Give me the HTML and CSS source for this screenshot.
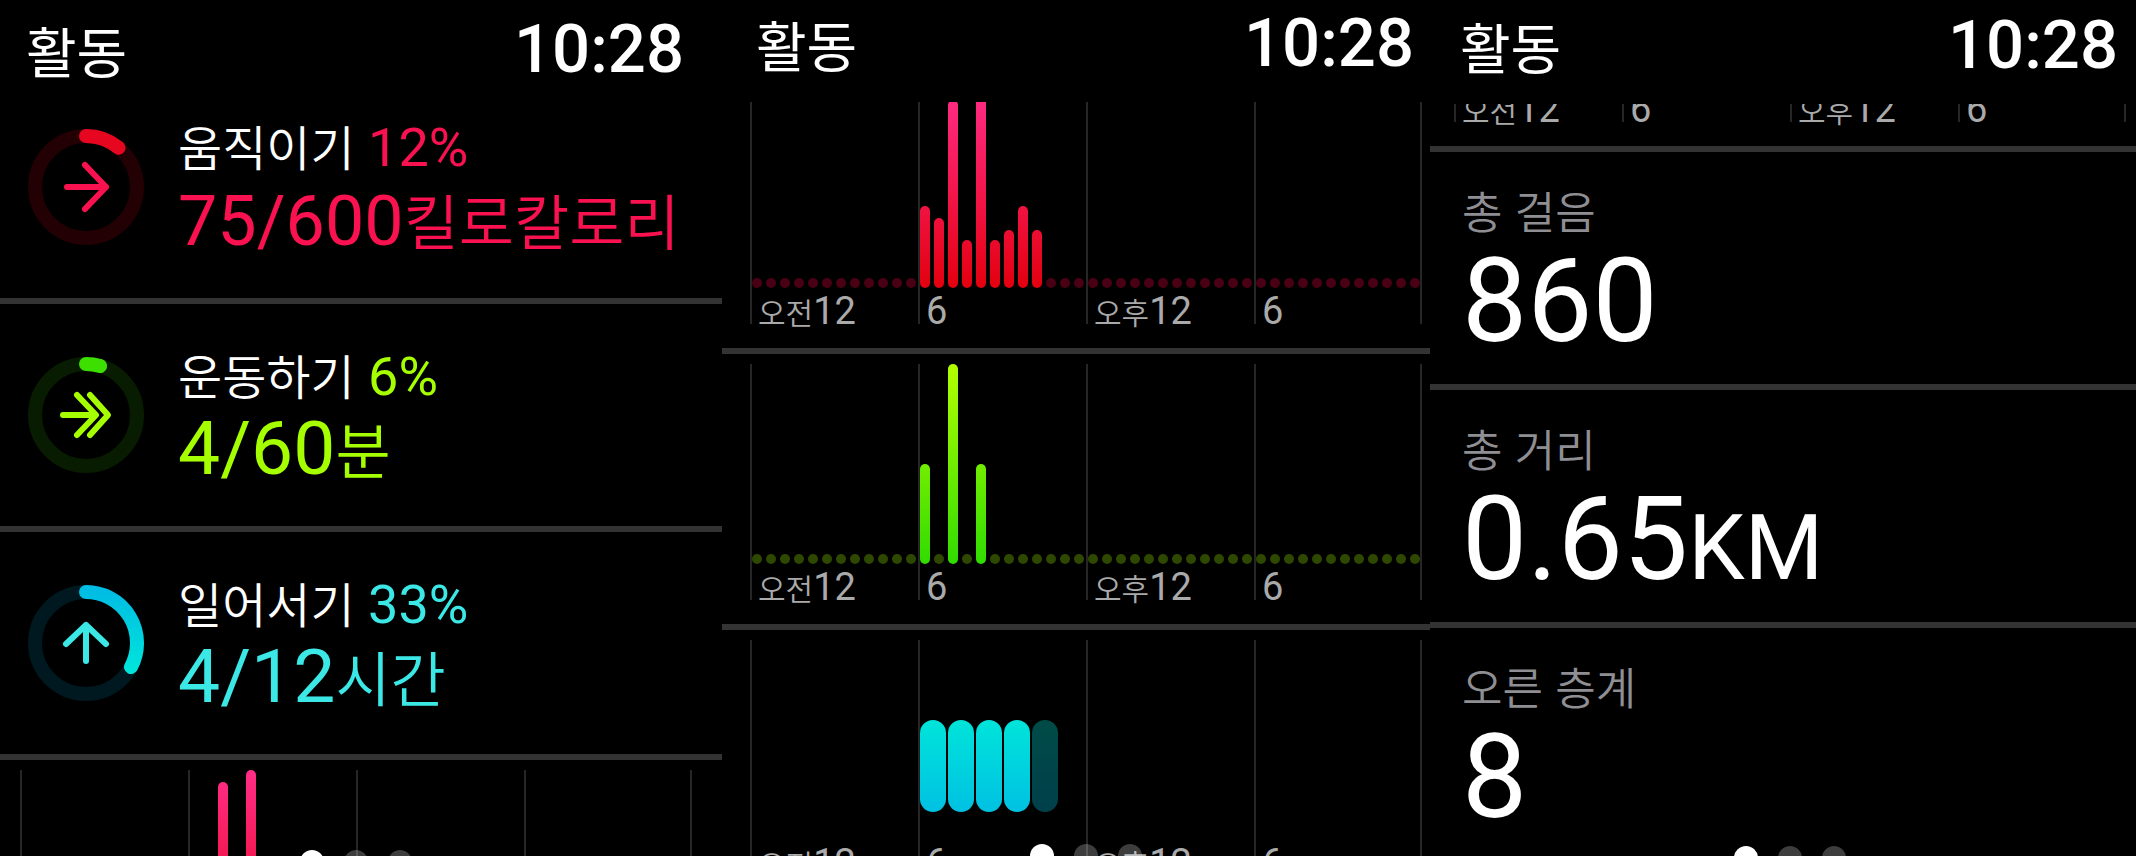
FILE: index.html
```html
<!DOCTYPE html>
<html lang="ko">
<head>
    <meta charset="UTF-8">
    <meta name="viewport" content="width=device-width, initial-scale=1.0">
    <title>활동</title>
    <link rel="stylesheet" href="styles.css">
</head>
<body>
    <main class="screens">
        <section class="screen screen-rings">
            <header class="status-bar">
                <h1>활동</h1>
                <time>10:28</time>
            </header>
            <div class="content">
                <article class="goal goal-move">
                    <svg class="ring" viewBox="0 0 116 118" aria-hidden="true">
                        <circle class="track" cx="58" cy="59" r="51"/>
                        <circle class="progress" cx="58" cy="59" r="51" pathLength="100" stroke-dasharray="11 100" transform="rotate(-90 58 59)"/>
                        <path class="arrow" d="M39 59H78M57 37L78 59L57 81"/>
                    </svg>
                    <div class="goal-info">
                        <h2>움직이기 <span class="percent">12%</span></h2>
                        <p class="amount">75/600<span class="unit">킬로칼로리</span></p>
                    </div>
                </article>
                <article class="goal goal-exercise">
                    <svg class="ring" viewBox="0 0 116 118" aria-hidden="true">
                        <circle class="track" cx="58" cy="59" r="51"/>
                        <circle class="progress" cx="58" cy="59" r="51" pathLength="100" stroke-dasharray="4.5 100" transform="rotate(-90 58 59)"/>
                        <path class="arrow" d="M35 59H67M49 39L68 59L49 79M62 39L80 59L62 79"/>
                    </svg>
                    <div class="goal-info">
                        <h2>운동하기 <span class="percent">6%</span></h2>
                        <p class="amount">4/60<span class="unit">분</span></p>
                    </div>
                </article>
                <article class="goal goal-stand">
                    <svg class="ring" viewBox="0 0 116 118" aria-hidden="true">
                        <defs>
                            <linearGradient id="standGradient" x1="0" y1="0" x2="0" y2="1">
                                <stop offset="0" stop-color="#00bde3"/>
                                <stop offset="1" stop-color="#00e3dc"/>
                            </linearGradient>
                        </defs>
                        <circle class="track" cx="58" cy="59" r="51"/>
                        <path class="progress" stroke="url(#standGradient)" d="M58 8A51 51 0 0 1 103 83"/>
                        <path class="arrow" d="M58 41V77M38 60L58 41L78 60"/>
                    </svg>
                    <div class="goal-info">
                        <h2>일어서기 <span class="percent">33%</span></h2>
                        <p class="amount">4/12<span class="unit">시간</span></p>
                    </div>
                </article>
                <div class="chart" data-chart="move"></div>
            </div>
            <div class="page-dots"><span class="dot active"></span><span class="dot"></span><span class="dot"></span></div>
        </section>

        <section class="screen screen-charts">
            <header class="status-bar">
                <h1>활동</h1>
                <time>10:28</time>
            </header>
            <div class="content">
                <div class="chart" data-chart="move"></div>
                <div class="chart" data-chart="exercise"></div>
                <div class="chart" data-chart="stand"></div>
            </div>
            <div class="page-dots"><span class="dot active"></span><span class="dot"></span><span class="dot"></span></div>
        </section>

        <section class="screen screen-totals">
            <header class="status-bar">
                <h1>활동</h1>
                <time>10:28</time>
            </header>
            <div class="content">
                <div class="chart" data-chart="stand"></div>
                <article class="total">
                    <h2>총 걸음</h2>
                    <p>860</p>
                </article>
                <article class="total">
                    <h2>총 거리</h2>
                    <p>0.65<span class="km">KM</span></p>
                </article>
                <article class="total">
                    <h2>오른 층계</h2>
                    <p>8</p>
                </article>
            </div>
            <div class="page-dots"><span class="dot active"></span><span class="dot"></span><span class="dot"></span></div>
        </section>
    </main>

    <script src="charts.js"></script>
</body>
</html>
```

FILE: charts.js
```js
// bar heights in percent of the plot, keyed by slot (48 half hours, or 24 hours for stand)
const charts = {
    move: {
        slots: 48,
        values: { 12: 41, 13: 35, 14: 94, 15: 24, 16: 100, 17: 24, 18: 29, 19: 41, 20: 29 }
    },
    exercise: {
        slots: 48,
        values: { 12: 50, 14: 100, 16: 50 }
    },
    stand: {
        slots: 24,
        values: { 6: 1, 7: 1, 8: 1, 9: 1, 10: 0 }
    }
};

const labels = [['오전', '12'], ['', '6'], ['오후', '12'], ['', '6']];

function buildSlot(name, value) {
    const slot = document.createElement('span');
    slot.className = 'slot';
    if (value === undefined) return slot;

    if (name === 'stand') {
        slot.classList.add(value ? 'stood' : 'idle');
    } else {
        slot.classList.add('bar');
        slot.style.height = `${value}%`;
    }
    return slot;
}

document.querySelectorAll('.chart').forEach((chart) => {
    const name = chart.dataset.chart;
    const { slots, values } = charts[name];
    const perQuarter = slots / 4;
    chart.classList.add(`chart-${name}`);

    labels.forEach(([prefix, hour], quarter) => {
        const column = document.createElement('div');
        column.className = 'quarter';

        const plot = document.createElement('div');
        plot.className = 'plot';
        for (let i = 0; i < perQuarter; i++) {
            plot.appendChild(buildSlot(name, values[quarter * perQuarter + i]));
        }

        const label = document.createElement('div');
        label.className = 'hour';
        label.innerHTML = `<span class="prefix">${prefix}</span>${hour}`;

        column.append(plot, label);
        chart.appendChild(column);
    });
});
```

FILE: styles.css
```css
* {
    margin: 0;
    padding: 0;
    box-sizing: border-box;
}

body {
    background: #000;
    color: #fff;
    font-family: Roboto, 'Noto Sans CJK KR', sans-serif;
    overflow: hidden;
}

h1, h2 {
    font-family: 'Noto Sans CJK KR', sans-serif;
    font-weight: 400;
}

.screens {
    display: grid;
    grid-template-columns: 722fr 708fr 706fr;
    height: 100vh;
}

.screen {
    position: relative;
    display: flex;
    flex-direction: column;
    min-width: 0;
    overflow: hidden;
}

/* status bar */
.status-bar {
    display: flex;
    flex: none;
    justify-content: space-between;
    align-items: flex-start;
    height: 104px;
    padding: 10px 38px 0 26px;
}

.screen-charts .status-bar {
    height: 102px;
    padding: 4px 16px 0 34px;
}

.screen-totals .status-bar {
    padding: 6px 18px 0 30px;
}

.status-bar h1 {
    font-size: 55px;
    line-height: 78px;
}

.status-bar time {
    font-size: 67px;
    font-weight: 500;
    line-height: 78px;
}

.content {
    flex: 1;
    min-height: 0;
    overflow: hidden;
}

/* scrolled position of each screen */
.screen-rings .goal-move {
    margin-top: -28px;
}

.screen-charts .chart-move {
    margin-top: -24px;
}

.screen-totals .chart-stand {
    margin-top: -228px;
}

/* goals */
.goal {
    display: flex;
    align-items: center;
    gap: 34px;
    height: 228px;
    padding-left: 28px;
    border-bottom: 6px solid #333;
}

.ring {
    flex: none;
    width: 116px;
    height: 118px;
    fill: none;
    stroke-linecap: round;
    stroke-linejoin: round;
}

.track, .progress {
    stroke-width: 14;
}

.arrow {
    stroke: currentColor;
    stroke-width: 6;
}

.goal-info {
    padding-bottom: 4px;
    white-space: nowrap;
}

.goal h2 {
    color: #fff;
    font-size: 48px;
    font-weight: 350;
    line-height: 66px;
}

.percent {
    font-family: Roboto, sans-serif;
    font-size: 54px;
    font-weight: 400;
}

.amount {
    font-size: 75px;
    line-height: 76px;
}

.unit {
    font-family: 'Noto Sans CJK KR', sans-serif;
    font-size: 60px;
    font-weight: 350;
}

.goal-move .amount {
    font-size: 70px;
}

.goal-move, .goal-move .percent {
    color: #fa114f;
}

.goal-move .track {
    stroke: #220003;
}

.goal-move .progress {
    stroke: #e6061f;
}

.goal-exercise, .goal-exercise .percent {
    color: #a6ff00;
}

.goal-exercise .track {
    stroke: #071c00;
}

.goal-exercise .progress {
    stroke: #3cdf00;
}

.goal-stand, .goal-stand .percent {
    color: #3be8e6;
}

.goal-stand .track {
    stroke: #00181f;
}

/* charts */
.chart {
    display: grid;
    grid-template-columns: repeat(4, 1fr);
    padding: 10px 8px 24px 28px;
    border-bottom: 6px solid #333;
}

.screen-rings .chart {
    padding-left: 20px;
    padding-right: 30px;
}

.screen-totals .chart {
    padding-left: 24px;
    padding-right: 10px;
}

.quarter {
    border-left: 2px solid #262626;
}

.quarter:last-child {
    border-right: 2px solid #262626;
}

.plot {
    display: flex;
    align-items: flex-end;
    gap: 4px;
    height: 200px;
    padding-right: 2px;
}

.quarter:last-child .plot {
    padding-right: 0;
}

.slot {
    flex: 1;
    height: 10px;
    border-radius: 5px;
}

.bar {
    background-position: bottom;
    background-size: 100% 200px;
}

.chart-move .slot {
    background-color: #4a0014;
}

.chart-move .bar {
    background-image: linear-gradient(#ff2d87, #f3174e 50%, #e2000e);
}

.chart-exercise .slot {
    background-color: #2f4800;
}

.chart-exercise .bar {
    background-image: linear-gradient(#b4ff00, #30dc00);
}

.chart-stand .plot {
    gap: 2px;
    padding-right: 0;
    padding-bottom: 28px;
}

.chart-stand .slot {
    height: 92px;
    border-radius: 13px;
}

.chart-stand .stood, .chart-stand .idle {
    background: linear-gradient(#00e4da, #00c1e2);
}

.chart-stand .idle {
    opacity: 0.33;
}

.hour {
    height: 36px;
    padding-left: 6px;
    color: #aaa;
    font-size: 38px;
    line-height: 46px;
    white-space: nowrap;
}

.prefix {
    font-family: 'Noto Sans CJK KR', sans-serif;
    font-size: 30px;
    font-weight: 350;
}

/* totals */
.total {
    height: 238px;
    padding: 26px 0 0 32px;
    border-bottom: 6px solid #333;
}

.total h2 {
    color: #8e8e93;
    font-size: 44px;
    font-weight: 350;
    line-height: 64px;
}

.total p {
    font-size: 116px;
    line-height: 118px;
}

.km {
    font-size: 90px;
}

/* page dots */
.page-dots {
    position: absolute;
    top: 850px;
    left: 300px;
    display: flex;
    gap: 20px;
}

.screen-charts .page-dots {
    top: 844px;
    left: 308px;
}

.screen-totals .page-dots {
    top: 846px;
    left: 304px;
}

.dot {
    width: 24px;
    height: 24px;
    border-radius: 50%;
    background: rgba(255, 255, 255, 0.24);
}

.dot.active {
    background: #fff;
}
```
